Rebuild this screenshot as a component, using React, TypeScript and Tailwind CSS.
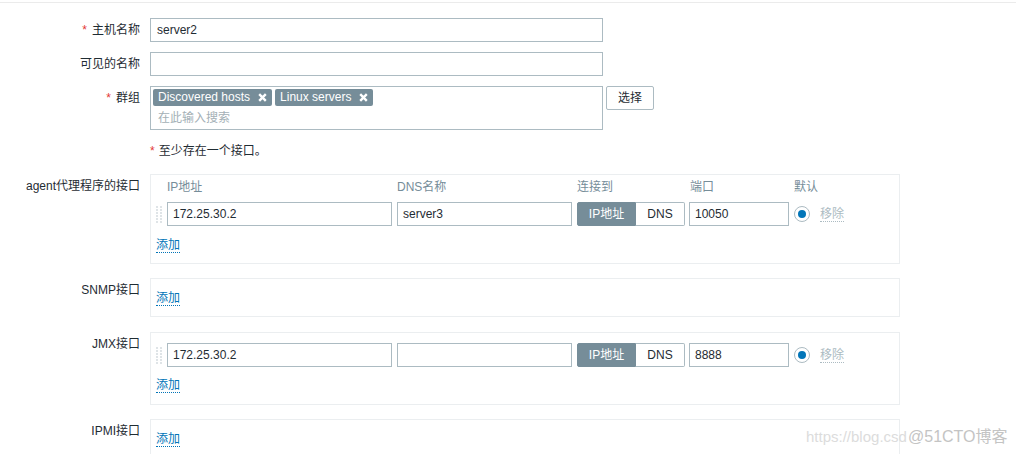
import React from "react";

const FONT = "font-[family-name:Liberation_Sans,Noto_Sans_CJK_SC,sans-serif]";

function Star() {
  return <span className="text-[#e33734] mr-[5px]">*</span>;
}

function Row({ label, children, box }: { label: React.ReactNode; children: React.ReactNode; box?: boolean }) {
  return (
    <div className="flex">
      <div
        className={
          box
            ? "w-[140px] shrink-0 text-right pt-[5px] leading-[14px] text-[12px] text-[#1f2c33]"
            : "w-[140px] shrink-0 text-right h-6 leading-6 text-[12px] text-[#1f2c33]"
        }
      >
        {label}
      </div>
      <div className="ml-[10px]">{children}</div>
    </div>
  );
}

function Handle() {
  return (
    <svg width="6" height="17" viewBox="0 0 6 17" className="shrink-0">
      {[0, 3, 6, 9, 12, 15].map((y) => (
        <g key={y} fill="#dfe4e7">
          <rect x="0" y={y} width="2" height="2" />
          <rect x="4" y={y} width="2" height="2" />
        </g>
      ))}
    </svg>
  );
}

function XIcon() {
  return (
    <svg width="9" height="9" viewBox="0 0 9 9" className="ml-[8px]">
      <path d="M1.2 1.2 L7.8 7.8 M7.8 1.2 L1.2 7.8" stroke="#fff" strokeWidth="2.4" strokeLinecap="butt" />
    </svg>
  );
}

function Tag({ text }: { text: string }) {
  return (
    <div className="h-[17px] bg-[#768d99] rounded-[2px] pl-[5px] pr-[5px] flex items-center text-white text-[12px] leading-[17px]">
      <span>{text}</span>
      <XIcon />
    </div>
  );
}

function AddLink() {
  return (
    <div className="flex h-[15px]">
      <span className="block leading-[14px] text-[12px] text-[#0275b8] border-b border-dotted border-[#0275b8]">添加</span>
    </div>
  );
}

function IfaceRow({ ip, dns, port }: { ip: string; dns: string; port: string }) {
  return (
    <div className="flex items-center h-6">
      <Handle />
      <div className="ml-[5px] w-[225px] h-6 border border-[#acbbc2] pl-[5px] flex items-center text-[12px] text-[#1f2c33]">{ip}</div>
      <div className="ml-[5px] w-[175px] h-6 border border-[#acbbc2] pl-[5px] flex items-center text-[12px] text-[#1f2c33]">{dns}</div>
      <div className="ml-[5px] flex h-6">
        <div className="w-[59px] h-6 bg-[#768d99] border border-[#768d99] rounded-l-[2px] flex items-center justify-center text-white text-[12px]">IP地址</div>
        <div className="w-[49px] h-6 bg-white border border-l-0 border-[#acbbc2] rounded-r-[2px] flex items-center justify-center text-[#1f2c33] text-[12px]">DNS</div>
      </div>
      <div className="ml-[4px] w-[100px] h-6 border border-[#acbbc2] pl-[5px] flex items-center text-[12px] text-[#1f2c33]">{port}</div>
      <div className="ml-[5px] w-4 h-4 rounded-full border border-[#acbbc2] bg-white flex items-center justify-center">
        <div className="w-2 h-2 rounded-full bg-[#0275b8]" />
      </div>
      <span className="ml-[10px] block leading-[14px] text-[12px] text-[#acbbc2] border-b border-dotted border-[#acbbc2]">移除</span>
    </div>
  );
}

export default function App() {
  return (
    <div className={`${FONT} relative w-[1016px] h-[454px] bg-white overflow-hidden text-[12px] text-[#1f2c33]`}>
      <div className="h-[2px]" />
      <div className="h-px bg-[#ebebeb]" />
      <div className="flex flex-col pt-[15px]">
        <Row label={<><Star />主机名称</>}>
          <div className="w-[453px] h-6 border border-[#acbbc2] pl-[6px] flex items-center text-[12px]">server2</div>
        </Row>
        <div className="mt-[10px]">
          <Row label="可见的名称">
            <div className="w-[453px] h-6 border border-[#acbbc2]" />
          </Row>
        </div>
        <div className="mt-[10px]">
          <Row label={<><Star />群组</>}>
            <div className="flex items-start">
              <div className="w-[453px] h-[44px] border border-[#acbbc2] pt-[2px] pl-[2px]">
                <div className="flex gap-[3px]">
                  <Tag text="Discovered hosts" />
                  <Tag text="Linux servers" />
                </div>
                <div className="mt-[2px] h-[20px] leading-[20px] pl-[5px] text-[#a4b0b6]">在此输入搜索</div>
              </div>
              <div className="ml-[3px] w-[48px] h-6 border border-[#acbbc2] rounded-[2px] flex items-center justify-center text-[12px]">选择</div>
            </div>
          </Row>
        </div>
        <div className="mt-[14px] pl-[150px] h-[14px] leading-[14px]">
          <span className="text-[#e33734] mr-[4px]">*</span>至少存在一个接口。
        </div>
        <div className="mt-[16px]">
          <Row label="agent代理程序的接口" box>
            <div className="w-[750px] border border-[#ebeef0] pl-[5px] pt-[5px] pb-[10px]">
              <div className="flex h-[14px] leading-[14px] text-[#768d99]">
                <div className="w-[11px]" />
                <div className="w-[230px]">IP地址</div>
                <div className="w-[180px]">DNS名称</div>
                <div className="w-[113px]">连接到</div>
                <div className="w-[104px]">端口</div>
                <div>默认</div>
              </div>
              <div className="mt-[8px]">
                <IfaceRow ip="172.25.30.2" dns="server3" port="10050" />
              </div>
              <div className="mt-[12px]">
                <AddLink />
              </div>
            </div>
          </Row>
        </div>
        <div className="mt-[14px]">
          <Row label="SNMP接口" box>
            <div className="w-[750px] border border-[#ebeef0] pl-[5px] pt-[12px] pb-[10px]">
              <AddLink />
            </div>
          </Row>
        </div>
        <div className="mt-[15px]">
          <Row label="JMX接口" box>
            <div className="w-[750px] border border-[#ebeef0] pl-[5px] pt-[10px] pb-[11px]">
              <IfaceRow ip="172.25.30.2" dns="" port="8888" />
              <div className="mt-[11px]">
                <AddLink />
              </div>
            </div>
          </Row>
        </div>
        <div className="mt-[14px]">
          <Row label="IPMI接口" box>
            <div className="w-[750px] border border-[#ebeef0] pl-[5px] pt-[12px] pb-[10px]">
              <AddLink />
            </div>
          </Row>
        </div>
      </div>
      <div className="absolute left-[806px] top-[428px] text-[15px] leading-[18px] text-[#dcdcdc] whitespace-nowrap">https://blog.csd</div>
      <div className="absolute left-[908px] top-[427px] text-[16px] leading-[20px] text-[#c4c4c4] whitespace-nowrap">@51CTO博客</div>
    </div>
  );
}
